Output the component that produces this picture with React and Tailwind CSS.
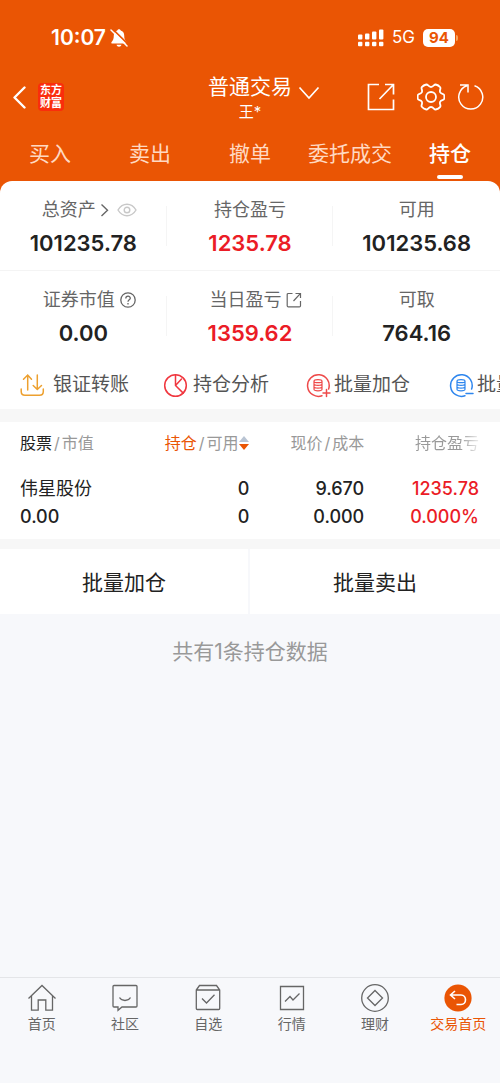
import { useState } from "react";

const tabs = ["买入", "卖出", "撤单", "委托成交", "持仓"];

const holdings = [
    { name: "伟星股份", value: "0.00", amount: "0", available: "0", price: "9.670", cost: "0.000", profit: "1235.78", rate: "0.000%" },
];

const navItems = [
    { label: "首页", icon: HomeIcon },
    { label: "社区", icon: ChatIcon },
    { label: "自选", icon: PickIcon },
    { label: "行情", icon: MarketIcon },
    { label: "理财", icon: WealthIcon },
    { label: "交易首页", icon: TradeIcon, active: true },
];

export default function App() {
    return (
        <div className="flex min-h-screen flex-col bg-[#f7f8fb] font-['Inter','Noto_Sans_CJK_SC',sans-serif] text-[#222]">
            <header className="bg-[#ea5504] text-white">
                <StatusBar />
                <TitleBar />
                <Tabs />
            </header>
            <main className="flex-1">
                <div className="bg-[#ea5504]">
                    <Summary />
                </div>
                <Holdings />
                <div className="grid grid-cols-2 divide-x-2 divide-[#f7f8fb] border-t-[10px] border-[#f7f7f7] bg-white">
                    <button className="h-[65px] pt-[2px] text-[21px]">批量加仓</button>
                    <button className="h-[65px] pt-[2px] text-[21px]">批量卖出</button>
                </div>
                <p className="pt-6 text-center text-[21px] leading-7 text-[#999]">共有1条持仓数据</p>
            </main>
            <BottomNav />
        </div>
    );
}

const StatusBar = () => (
    <div className="flex h-[74px] items-center justify-between pt-[2px] pr-[42px] pl-[51px]">
        <div className="flex items-center gap-1">
            <span className="text-[21px] font-semibold">10:07</span>
            <svg className="h-5 w-[18px]" viewBox="0 0 18 20" fill="currentColor">
                <path d="M9 1.2c.9 0 1.6.6 1.7 1.4 2.3.7 3.5 2.6 3.5 5 0 3.5.8 4.8 2.2 6.3.6.7.3 1.6-.7 1.6H2.300c-1 0-1.300-.9-.7-1.600C3 12.400 3.800 11.100 3.800 7.600c0-2.400 1.200-4.300 3.500-5C7.400 1.800 8.100 1.200 9 1.200z" />
                <path d="M6.500 16.700h5c-.3 1.200-1.300 2-2.500 2s-2.200-.8-2.500-2z" />
                <path d="M2 .4 18 16.200" stroke="#ea5504" strokeWidth="1.600" />
                <path d="M1 2 17 18" stroke="currentColor" strokeWidth="1.500" strokeLinecap="round" />
            </svg>
        </div>
        <div className="flex items-center">
            <svg className="h-[18px] w-[26px]" viewBox="0 0 26 18" fill="currentColor">
                <rect x="0" y="5.500" width="4.400" height="5" rx="1" />
                <rect x="7" y="4.500" width="4.400" height="6" rx="1" />
                <rect x="14" y="2.500" width="4.400" height="8" rx="1" />
                <rect x="21" y="0.500" width="4.400" height="10" rx="1" />
                <rect x="0" y="12.800" width="4.400" height="4.400" rx="1" />
                <rect x="7" y="12.800" width="4.400" height="4.400" rx="1" />
                <rect x="14" y="12.800" width="4.400" height="4.400" rx="1" />
                <rect x="21" y="12.800" width="4.400" height="4.400" rx="1" />
            </svg>
            <span className="ml-2 text-[17px]">5G</span>
            <span className="ml-2 flex h-[18px] w-8 items-center justify-center rounded-[5px] bg-white text-[15px] font-bold text-[#ea5504]">94</span>
            <span className="ml-px h-[6px] w-[2px] rounded-r bg-[#f6a560]" />
        </div>
    </div>
);

const TitleBar = () => (
    <div className="grid h-[50px] grid-cols-[1fr_auto_1fr] items-center">
        <div className="flex items-center gap-3 pb-1 pl-3">
            <button aria-label="返回">
                <svg className="h-6 w-[14px]" viewBox="0 0 14 24" fill="none" stroke="currentColor" strokeWidth="2.400" strokeLinecap="round" strokeLinejoin="round">
                    <path d="M12.500 2.500 2.500 12.500 12.500 22.500" />
                </svg>
            </button>
            <span className="flex h-7 w-[26px] items-center justify-center rounded bg-[#fa2d0c] text-[11px] leading-[13px] font-bold">
                东方
                <br />
                财富
            </span>
        </div>
        <button className="flex flex-col items-center">
            <span className="flex items-center gap-[6px] pl-7 text-[21px] leading-[26px]">
                普通交易
                <svg className="mt-3 h-[14px] w-[22px]" viewBox="0 0 22 14" fill="none" stroke="currentColor" strokeWidth="1.700">
                    <path d="M1.500 1.500 11 12 20.500 1.500" />
                </svg>
            </span>
            <span className="text-[15px] leading-6">王*</span>
        </button>
        <div className="flex items-center justify-end pr-[15px] pb-1">
            <button aria-label="分享">
                <svg className="size-7" viewBox="0 0 28 28" fill="none" stroke="currentColor" strokeWidth="1.700">
                    <path d="M12 1.500H1.500V26.500H26.500V16.500M18 1.500H26.500V11.500M26 2 12.500 16" />
                </svg>
            </button>
            <button aria-label="设置" className="ml-[22px]">
                <svg className="size-7" viewBox="0 0 28 28" fill="none" stroke="currentColor" strokeWidth="1.800" strokeLinejoin="round">
                    <path d="M9.300 1.500C11 1.200 11.300 4 14 4S17 1.200 18.700 1.500C20 1.800 22.300 3.100 23.200 4.200 24.300 5.500 22.100 7.200 23.200 9.300 24.200 11.200 27 10.400 27.200 12.200Q27.500 14 27.200 15.800C27 17.600 24.200 16.800 23.200 18.700 22.100 20.800 24.300 22.500 23.200 23.800 22.300 24.900 20 26.200 18.700 26.500 17 26.800 16.700 24 14 24S11 26.800 9.300 26.500C8 26.200 5.700 24.900 4.800 23.800 3.700 22.500 5.900 20.800 4.800 18.700 3.800 16.800 1 17.600.8 15.800Q.5 14 .8 12.200C1 10.400 3.800 11.200 4.800 9.300 5.900 7.200 3.700 5.500 4.800 4.200 5.700 3.100 8 1.800 9.300 1.500Z" />
                    <circle cx="14" cy="14" r="5" />
                </svg>
            </button>
            <button aria-label="刷新" className="ml-3">
                <svg className="size-7" viewBox="0 0 28 28" fill="none" stroke="currentColor" strokeWidth="1.500">
                    <path d="M17.500 2.700A12 12 0 1 1 10 2.700M3 2H11V9.500" />
                </svg>
            </button>
        </div>
    </div>
);

const Tabs = () => {
    const [active, setActive] = useState("持仓");

    return (
        <nav className="grid grid-cols-5">
            {tabs.map((tab) => (
                <button
                    key={tab}
                    onClick={() => setActive(tab)}
                    className={`flex h-[57px] flex-col items-center pt-[14px] text-[21px] leading-8 ${active === tab ? "font-medium" : "text-[#ffd9c2]"}`}
                >
                    {tab}
                    {active === tab && <span className="mt-[5px] h-1 w-[26px] rounded-sm bg-white" />}
                </button>
            ))}
        </nav>
    );
};

const Summary = () => (
    <section className="rounded-t-xl bg-white">
        <div className="grid grid-cols-3 border-b border-[#f4f4f4]">
            <Stat label="总资产" value="101235.78">
                <svg className="ml-1 h-4 w-[9px]" viewBox="0 0 9 16" fill="none" stroke="currentColor" strokeWidth="1.400">
                    <path d="M1.500 2.500 7.500 8.300 1.500 14" />
                </svg>
                <svg className="ml-2 h-4 w-5" viewBox="0 0 20 16" fill="none" stroke="#c8c8c8" strokeWidth="1.400">
                    <path d="M1 8C3.200 4.300 6.300 2.200 10 2.200S16.800 4.300 19 8C16.800 11.700 13.700 13.800 10 13.800S3.200 11.700 1 8Z" />
                    <circle cx="10" cy="8" r="2.800" />
                </svg>
            </Stat>
            <Stat label="持仓盈亏" value="1235.78" red />
            <Stat label="可用" value="101235.68" />
        </div>
        <div className="grid grid-cols-3">
            <Stat label="证券市值" value="0.00">
                <svg className="ml-[5px] size-4" viewBox="0 0 16 16" fill="none" stroke="currentColor" strokeWidth="1.300">
                    <circle cx="8" cy="8" r="7.200" />
                    <path d="M5.800 6.500C5.800 3.400 10.300 3.500 10.300 6.200 10.300 7.800 8 7.900 8 9.700M8 11V12.400" />
                </svg>
            </Stat>
            <Stat label="当日盈亏" value="1359.62" red>
                <svg className="ml-[5px] size-4" viewBox="0 0 16 16" fill="none" stroke="currentColor" strokeWidth="1.200">
                    <path d="M6.500 1.500H2.300Q1.200 1.500 1.200 2.600V13.700Q1.200 14.800 2.300 14.800H13.400Q14.500 14.800 14.500 13.700V9M9.500 1.500H14.500V6M14.300 1.700 7.500 9" />
                </svg>
            </Stat>
            <Stat label="可取" value="764.16" />
        </div>
        <div className="flex h-[49px] items-center overflow-x-auto pt-[2px] pl-5 text-[#555] [scrollbar-width:none]">
            <QuickAction label="银证转账" gap="gap-2">
                <g stroke="#eda02f">
                    <path d="M1.200 16V18.500Q1.200 22.300 5 22.300H19.500Q23.300 22.300 23.300 18.500V16M7.700 17V2M3.500 6.200 7.700 2 11.500 6.200M17.300 2V16.500M13.200 12.500 17.300 16.500 21.500 12.500" />
                </g>
            </QuickAction>
            <QuickAction label="持仓分析" gap="gap-[5px]">
                <g stroke="#f0373f">
                    <circle cx="12.500" cy="12.500" r="10.800" />
                    <path d="M12.500 1.700V12.500L20.200 20.100M12.500 12.500 18.500 6" />
                </g>
            </QuickAction>
            <QuickAction label="批量加仓" gap="gap-[3px]">
                <g stroke="#ee4a4a">
                    <path d="M22.600 16A10.800 10.800 0 1 0 16 22.700" />
                    <Coins />
                    <path d="M20.500 16.500V23.500M17 20H24" />
                </g>
            </QuickAction>
            <QuickAction label="批量卖出" gap="gap-[3px]">
                <g stroke="#2e86ee">
                    <path d="M22.600 16A10.800 10.800 0 1 0 16 22.700" />
                    <Coins />
                    <path d="M17 20.500H24" />
                </g>
            </QuickAction>
        </div>
    </section>
);

const Stat = ({ label, value, red, children }) => (
    <div className="flex flex-col items-center gap-[6px] pt-[17px] pb-3 not-last:bg-[linear-gradient(#f5f5f5,#f5f5f5)] not-last:bg-[length:1px_40px] not-last:bg-right not-last:bg-no-repeat">
        <div className={`flex items-center text-lg leading-6 text-[#666] ${children ? "pl-3" : ""}`}>
            {label}
            {children}
        </div>
        <div className={`text-[22px] leading-[30px] font-semibold ${red ? "text-[#eb1c26]" : ""}`}>{value}</div>
    </div>
);

const QuickAction = ({ label, gap, children }) => (
    <button className={`flex w-[143px] shrink-0 items-center text-[19px] whitespace-nowrap ${gap}`}>
        <svg className="size-[25px]" viewBox="0 0 25 25" fill="none" strokeWidth="1.500" strokeLinecap="round">
            {children}
        </svg>
        {label}
    </button>
);

const Coins = () => (
    <path
        strokeWidth="1.200"
        d="M8 8.200C8 6.200 16 6.200 16 8.200S8 10.200 8 8.200V16.300C8 18.300 16 18.300 16 16.300V8.200M8 11C8 12.800 16 12.800 16 11M8 13.700C8 15.500 16 15.500 16 13.700"
    />
);

const Holdings = () => (
    <section className="border-t-[13px] border-[#f7f7f7] bg-white pr-[21px] pb-2 pl-5">
        <table className="w-full table-fixed text-right">
            <colgroup>
                <col className="w-[27%]" />
                <col className="w-[23%]" />
                <col className="w-[25%]" />
                <col className="w-[25%]" />
            </colgroup>
            <thead className="text-base text-[#999]">
                <tr className="h-[42px]">
                    <th className="text-left font-normal">
                        <span className="text-[#222]">股票</span>
                        <Slash />
                        市值
                    </th>
                    <th className="font-normal">
                        <button className="inline-flex items-center whitespace-nowrap">
                            <span className="text-[#ea5504]">持仓</span>
                            <Slash />
                            可用
                            <svg className="ml-px h-[14px] w-[10px]" viewBox="0 0 10 14">
                                <path d="M5 0 10 6H0Z" fill="#b9c4d3" />
                                <path d="M0 8H10L5 14Z" fill="#ea5504" />
                            </svg>
                        </button>
                    </th>
                    <th className="font-normal">
                        现价
                        <Slash />
                        成本
                    </th>
                    <th className="font-normal">
                        <span className="bg-linear-to-r from-[#999] from-70% to-[#eee] bg-clip-text text-transparent">持仓盈亏</span>
                    </th>
                </tr>
            </thead>
            <tbody className="text-lg leading-7 font-medium">
                {holdings.map((item) => (
                    <tr key={item.name}>
                        <td className="pt-[11px] text-left">
                            <div className="font-normal">{item.name}</div>
                            <div>{item.value}</div>
                        </td>
                        <td className="pt-[11px]">
                            <div>{item.amount}</div>
                            <div>{item.available}</div>
                        </td>
                        <td className="pt-[11px]">
                            <div>{item.price}</div>
                            <div>{item.cost}</div>
                        </td>
                        <td className="pt-[11px] text-[#eb1c26]">
                            <div>{item.profit}</div>
                            <div>{item.rate}</div>
                        </td>
                    </tr>
                ))}
            </tbody>
        </table>
    </section>
);

const Slash = () => <span className="mx-[2px]">/</span>;

const BottomNav = () => (
    <nav className="grid h-[106px] grid-cols-6 border-t border-[#e4e5e8]">
        {navItems.map(({ label, icon: Icon, active }) => (
            <a
                key={label}
                href="#"
                className={`flex flex-col items-center gap-px pt-[5px] text-sm leading-5 ${active ? "text-[#ea5504]" : "text-[#666]"}`}
            >
                <svg className="size-[30px]" viewBox="0 0 30 30" fill="none" stroke="currentColor" strokeWidth="1.300">
                    <Icon />
                </svg>
                {label}
            </a>
        ))}
    </nav>
);

function HomeIcon() {
    return <path d="M1.500 15.500 15 2.500 28.500 15.500M4.500 13V27.200H11.200V17H18.800V27.200H25.500V13" />;
}

function ChatIcon() {
    return <path d="M4 2.500H26Q27 2.500 27 3.500V23Q27 24 26 24H12L8 27.300V24H4Q3 24 3 23V3.500Q3 2.500 4 2.500ZM9.500 14.500C12 18.500 18 18.500 20.500 14.500" />;
}

function PickIcon() {
    return <path d="M3.300 7 6.500 2.500H23.500L26.700 7V25.500Q26.700 26.500 25.700 26.500H4.300Q3.300 26.500 3.300 25.500ZM3.300 7H26.700M9 15.500 13.500 20 21.500 11.800" />;
}

function MarketIcon() {
    return <path d="M3.500 3.500H26.500V26.500H3.500ZM8 18.500 13 13.500 16 17 22.500 10.500" />;
}

function WealthIcon() {
    return (
        <>
            <circle cx="15" cy="15" r="13.300" />
            <path d="M15 7.500 22.500 15 15 22.500 7.500 15Z" />
        </>
    );
}

function TradeIcon() {
    return (
        <>
            <circle cx="15" cy="15" r="13.600" fill="#ea5504" stroke="none" />
            <path d="M12 8 7.500 12 12 16M7.500 12H18C24 12 24 21.500 18 21.500H13.500" stroke="#fff" strokeWidth="1.600" />
        </>
    );
}
